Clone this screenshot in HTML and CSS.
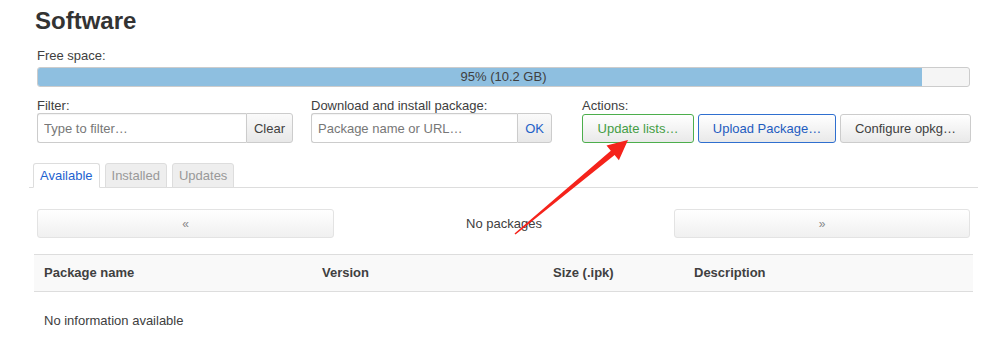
FILE: index.html
```html
<!DOCTYPE html>
<html lang="en">
<head>
  <meta charset="UTF-8">
  <meta name="viewport" content="width=device-width, initial-scale=1.0">
  <title>Software</title>
  <link rel="stylesheet" href="styles.css">
</head>
<body>

  <div class="page">
    <h2 class="title">Software</h2>

    <!-- Free space + controls -->
    <div class="controls">
      <div class="label">Free space:</div>
      <div class="progress">
        <div class="progress-bar" style="width: 95%"></div>
        <span class="progress-text">95% (10.2 GB)</span>
      </div>

      <div class="control-row">
        <div class="control filter">
          <div class="label-sm">Filter:</div>
          <div class="input-group">
            <input type="text" class="filter-input" placeholder="Type to filter…">
            <button class="btn-addon">Clear</button>
          </div>
        </div>

        <div class="control download">
          <div class="label-sm">Download and install package:</div>
          <div class="input-group">
            <input type="text" class="pkg-input" placeholder="Package name or URL…">
            <button class="btn-addon btn-ok">OK</button>
          </div>
        </div>

        <div class="control actions">
          <div class="label-sm">Actions:</div>
          <div class="action-buttons">
            <button class="btn btn-green">Update lists…</button>
            <button class="btn btn-blue">Upload Package…</button>
            <button class="btn btn-config">Configure opkg…</button>
          </div>
        </div>
      </div>
    </div>

    <!-- Tabs -->
    <ul class="tabs">
      <li class="tab active">Available</li>
      <li class="tab">Installed</li>
      <li class="tab">Updates</li>
    </ul>

    <!-- Pager -->
    <div class="pager">
      <button class="pager-btn">«</button>
      <div class="pager-text">No packages</div>
      <button class="pager-btn">»</button>
    </div>

    <!-- Package table -->
    <table class="pkg-table">
      <thead>
        <tr>
          <th class="col-name">Package name</th>
          <th class="col-version">Version</th>
          <th class="col-size">Size (.ipk)</th>
          <th>Description</th>
        </tr>
      </thead>
      <tbody>
        <tr>
          <td colspan="4">No information available</td>
        </tr>
      </tbody>
    </table>
  </div>

  <!-- Annotation arrow -->
  <svg class="arrow" width="1005" height="339" viewBox="0 0 1005 339">
    <polygon fill="#f5231b" points="514.5,233.4 610.8,150.7 606.5,145.6 628,140 618.9,160.2 614.6,155.1 515.5,234.6"/>
  </svg>

</body>
</html>
```

FILE: styles.css
```css
body {
  font-family: "Liberation Sans", Arial, sans-serif;
  font-size: 13px;
  color: #404040;
  background-color: #fff;
  margin: 0;
  padding: 0;
}
.page {
  padding: 8px 27px 0 29px;
}
.title {
  margin: 0 0 0 6px;
  font-size: 24px;
  line-height: 26px;
  font-weight: bold;
  color: #333;
}
.controls {
  margin: 0 8px;
}
.label {
  margin-top: 14px;
  line-height: 16px;
}
.progress {
  display: grid;
  margin-top: 3px;
  height: 20px;
  box-sizing: border-box;
  border: 1px solid #ccc;
  border-radius: 3px;
  background-color: #f5f5f5;
  overflow: hidden;
}
.progress-bar, .progress-text {
  grid-area: 1 / 1;
}
.progress-bar {
  background-color: #8ebfe0;
}
.progress-text {
  justify-self: center;
  align-self: center;
  line-height: 18px;
  color: #404040;
}
.control-row {
  display: flex;
  margin-top: 11px;
}
.control {
  flex-shrink: 0;
}
.label-sm {
  line-height: 15px;
}
.filter {
  width: 256px;
  margin-right: 18px;
}
.download {
  width: 241px;
  margin-right: 30px;
}
.actions {
  flex: 1;
}
.input-group {
  display: flex;
  height: 30px;
}
.input-group input {
  flex: 1;
  min-width: 0;
  box-sizing: border-box;
  height: 30px;
  margin: 0;
  padding: 0 6px;
  border: 1px solid #ccc;
  border-right: none;
  border-radius: 3px 0 0 3px;
  font-family: inherit;
  font-size: 13px;
  color: #404040;
  box-shadow: inset 0 1px 1px rgba(0, 0, 0, 0.05);
}
.input-group input::placeholder {
  color: #777;
}
.btn-addon {
  box-sizing: border-box;
  height: 30px;
  margin: 0;
  padding: 0 7px;
  border: 1px solid #ccc;
  border-radius: 0 3px 3px 0;
  background: linear-gradient(#fafafa, #e8e8e8);
  font-family: inherit;
  font-size: 13px;
  color: #404040;
}
.btn-ok {
  color: #1e62c8;
}
.action-buttons {
  display: flex;
  gap: 4px;
  padding-top: 1px;
}
.btn {
  box-sizing: border-box;
  height: 29px;
  margin: 0;
  padding: 0;
  white-space: nowrap;
  border: 1px solid #ccc;
  border-radius: 3px;
  background: linear-gradient(#fff, #e9e9e9);
  font-family: inherit;
  font-size: 13px;
  color: #404040;
}
.btn-green {
  width: 112px;
  border-color: #4cae4c;
  color: #449d44;
}
.btn-blue {
  width: 138px;
  border-color: #2f6fcf;
  color: #1e5cc0;
}
.btn-config {
  width: 131px;
}
.tabs {
  display: flex;
  gap: 5px;
  list-style: none;
  margin: 20px 0 0;
  padding: 0 0 0 4px;
  border-bottom: 1px solid #ddd;
}
.tab {
  margin-bottom: -1px;
  padding: 0 6px;
  line-height: 23px;
  border: 1px solid #ddd;
  border-radius: 3px 3px 0 0;
  background-color: #eee;
  color: #999;
}
.tab.active {
  background-color: #fff;
  border-bottom-color: #fff;
  color: #1e62d0;
}
.pager {
  display: grid;
  grid-template-columns: 297px 1fr 296px;
  align-items: center;
  margin: 21px 8px 0;
}
.pager-btn {
  height: 29px;
  margin: 0;
  border: 1px solid #e3e3e3;
  border-radius: 3px;
  background: linear-gradient(#fff, #f0f0f0);
  font-family: inherit;
  font-size: 12px;
  color: #888;
}
.pager-text {
  text-align: center;
  line-height: 16px;
}
.pkg-table {
  width: 939px;
  margin: 16px 5px 0;
  border-collapse: collapse;
}
.pkg-table th {
  padding: 10px;
  line-height: 16px;
  text-align: left;
  font-weight: bold;
  background-color: #f9f9f9;
  border-top: 1px solid #ddd;
  border-bottom: 1px solid #ddd;
}
.col-name {
  width: 258px;
}
.col-version {
  width: 211px;
}
.col-size {
  width: 121px;
}
.pkg-table td {
  padding: 21px 10px;
  line-height: 16px;
}
.arrow {
  position: absolute;
  top: 0;
  left: 0;
  pointer-events: none;
}
```
